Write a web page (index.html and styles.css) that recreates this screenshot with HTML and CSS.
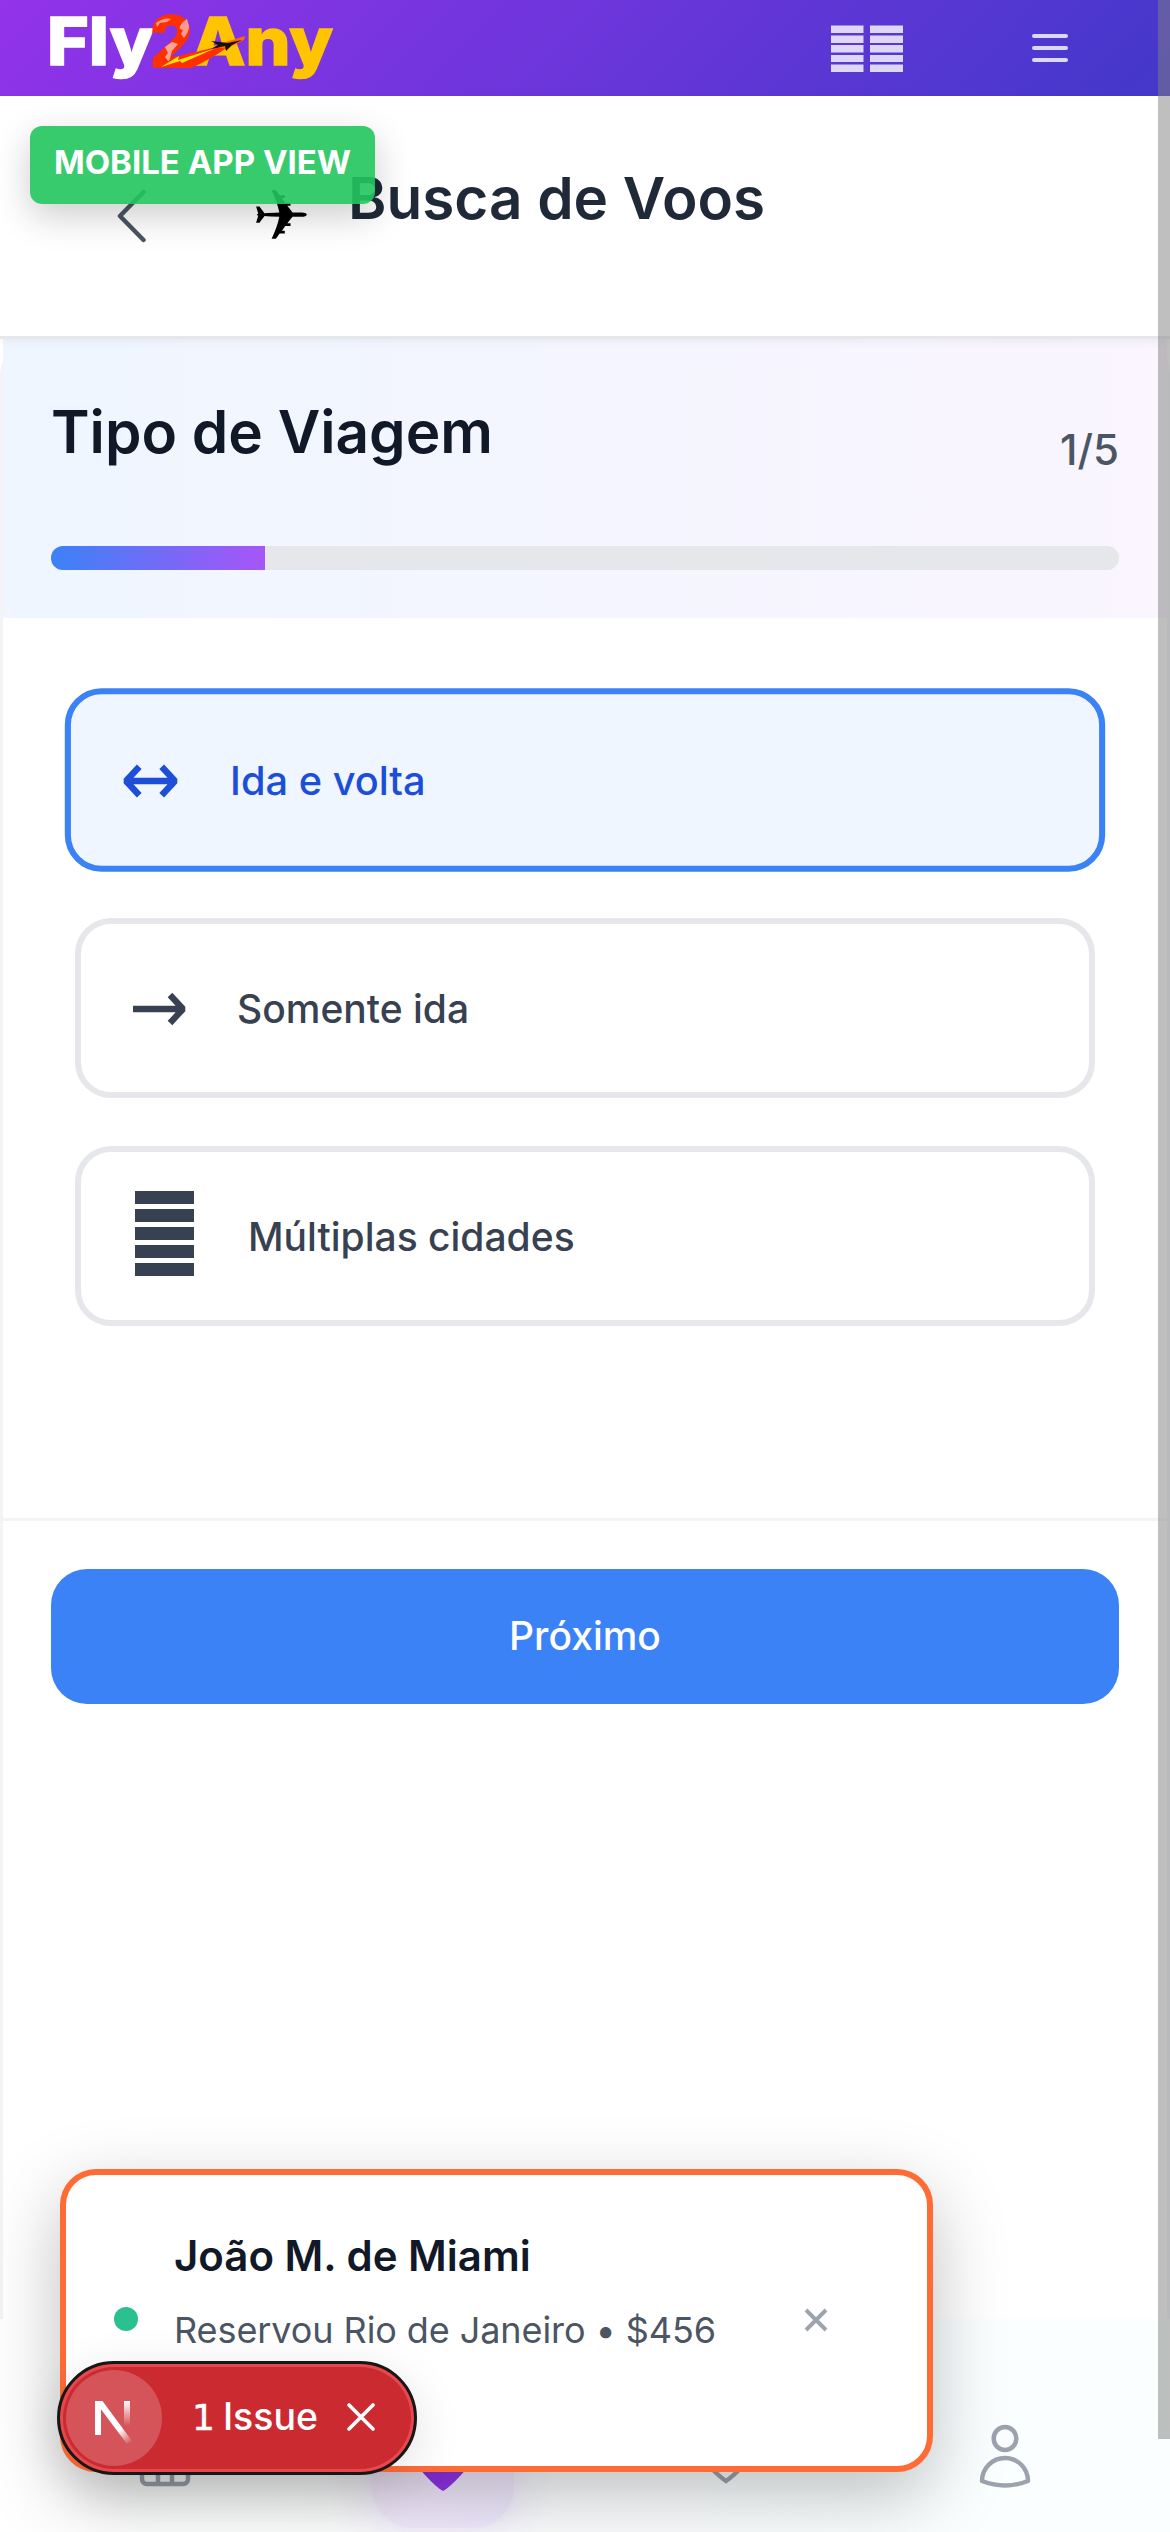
FILE: index.html
```html
<!DOCTYPE html>
<html lang="pt-BR">
<head>
<meta charset="utf-8">
<title>Fly2Any</title>
<link rel="stylesheet" href="styles.css">
</head>
<body>
<div class="page">
  <header class="topbar">
    <svg class="logo" width="300" height="96" viewBox="-6 0 300 96">
      <text class="logo-text" x="-1" y="65" textLength="107" lengthAdjust="spacingAndGlyphs" fill="#fff" stroke="#fff">Fly</text>
      <text class="logo-text" x="143" y="65" textLength="142" lengthAdjust="spacingAndGlyphs" fill="#ffc400" stroke="#ffc400">Any</text>
      <text class="logo-text logo-two" x="102" y="67" textLength="43" lengthAdjust="spacingAndGlyphs" fill="#ff3000" stroke="#ff3000">2</text>
      <path d="M108 23q8-6 15-4l-4 3-7 1-3 4zM139 19q-8 5-7 10l3 1-2 4 3 4q5-6 5-12z" fill="#ff9a8c"/>
      <path d="M124 42l-7 5 3 6-3 4 4 5 3-11 6-7z" fill="#ffa596"/>
      <path d="M114 67Q122 56 148 52L172 46L180 47Q160 61 143 68z" fill="#ff3000"/>
      <path d="M113 67L131 56L130 60L168 48L134 63L132 61z" fill="#ffe400"/>
      <path d="M165 46L197 36L196 40L178 49z" fill="#ff6a00"/>
      <path d="M163 41L180 43L194 40L184 45L178 51L177 46L163 49L170 45z" fill="#16110a"/>
    </svg>
    <div class="topbar-actions">
      <svg width="72" height="47" viewBox="0 0 72 47" fill="#fff" fill-opacity=".8"><path d="M0 .5h32.500v7.500H0zM39 .5h33v7.500H39zM0 10.500h32.500v7.500H0zM39 10.500h33v7.500H39zM0 20h32.500v7.500H0zM39 20h33v7.500H39zM0 30h32.500v7H0zM39 30h33v7H39zM0 39.500h32.500v7.500H0zM39 39.500h33v7.500H39z"/></svg>
      <svg width="36" height="28" viewBox="0 0 36 28" stroke="#fff" stroke-opacity=".8" stroke-width="4" stroke-linecap="round"><path d="M2 2h32M2 14h32M2 26h32"/></svg>
    </div>
  </header>

  <div class="titlebar">
    <svg class="back" width="30" height="54" viewBox="0 0 30 54" fill="none" stroke="#4b5563" stroke-width="4.500" stroke-linecap="round" stroke-linejoin="round"><path d="M26.500 3L3 27l23.500 24"/></svg>
    <span class="plane">✈</span>
    <h1>Busca de Voos</h1>
  </div>

  <main class="wizard">
    <section class="step">
      <div class="step-head">
        <h2>Tipo de Viagem</h2>
        <span class="count">1/5</span>
      </div>
      <div class="track"><div class="fill" style="width:20%"></div></div>
    </section>

    <div class="options">
      <div class="option selected">
        <svg width="60" height="36" viewBox="0 -1 60 36" fill="none" stroke="currentColor" stroke-width="6.300" stroke-linejoin="bevel"><path d="M6 18h48M19 4L6 18l13 14M41 4l13 14-13 14"/></svg>
        <span>Ida e volta</span>
      </div>
      <div class="option">
        <svg width="60" height="36" viewBox="0 -1 60 36" fill="none" stroke="currentColor" stroke-width="6.300" stroke-linejoin="bevel"><path d="M4 18h50M41 4l13 14-13 14"/></svg>
        <span>Somente ida</span>
      </div>
      <div class="option">
        <svg class="stack" width="71" height="85" viewBox="0 0 71 85" fill="currentColor"><path d="M6 0h59v13H6zM6 18h59v13H6zM6 36h59v13H6zM6 54h59v13H6zM6 72h59v13H6z"/></svg>
        <span>Múltiplas cidades</span>
      </div>
    </div>

    <div class="actions"><div class="next">Próximo</div></div>
  </main>

  <nav class="tabs">
    <svg class="tab" width="54" height="66" viewBox="0 0 54 66" fill="none" stroke="#9ca3af" stroke-width="4.500"><rect x="4" y="10" width="46" height="52" rx="5"/><path d="M20 42v20M34 42v20"/></svg>
    <div class="tab active"><svg width="60" height="54" viewBox="0 0 60 54"><path d="M30 53Q24 50 12 37Q2 27 2 17A14 14 0 0 1 30 10A14 14 0 0 1 58 17Q58 27 48 37Q36 50 30 53z" fill="#9333ea"/></svg></div>
    <svg class="tab" width="60" height="54" viewBox="0 0 60 54" fill="none" stroke="#9ca3af" stroke-width="4.500"><path d="M30 47Q24 43 14 33Q5 25 5 17A12 12 0 0 1 30 12A12 12 0 0 1 55 17Q55 25 46 33Q36 43 30 47z"/></svg>
    <svg class="tab" width="54" height="66" viewBox="0 0 54 66" fill="none" stroke="#9ca3af" stroke-width="4.500" stroke-linejoin="round"><ellipse cx="27" cy="16.500" rx="11.300" ry="11.500"/><path d="M4 59A23 23 0 0 1 50 59Q38 63.500 27 63.500Q16 63.500 4 59z"/></svg>
  </nav>

  <div class="badge">MOBILE APP VIEW</div>

  <aside class="toast">
    <span class="dot"></span>
    <div class="toast-text">
      <strong>João M. de Miami</strong>
      <span>Reservou Rio de Janeiro • $456</span>
    </div>
    <svg class="close" width="24" height="24" viewBox="0 0 24 24" stroke="#9ca3af" stroke-width="3.900"><path d="M2 2l20 20M22 2L2 22"/></svg>
  </aside>

  <div class="issue">
    <div class="issue-mark">
      <svg width="42" height="44" viewBox="0 0 42 44">
        <defs>
          <linearGradient id="ng1" gradientUnits="userSpaceOnUse" x1="22" y1="24" x2="38" y2="43"><stop offset=".3" stop-color="#fff"/><stop offset="1" stop-color="#fff" stop-opacity="0"/></linearGradient>
          <linearGradient id="ng2" x1="0" y1="0" x2="0" y2="1"><stop stop-color="#fff"/><stop offset="1" stop-color="#fff" stop-opacity="0"/></linearGradient>
        </defs>
        <rect x="2" y="1" width="6" height="34" fill="#fff"/>
        <path d="M2 1h7.500L39 41l-5 3L7 8z" fill="url(#ng1)"/>
        <rect x="31" y="1" width="6" height="25" fill="url(#ng2)"/>
      </svg>
    </div>
    <span class="issue-text"><span class="issue-count">1</span> Issue</span>
    <svg class="issue-close" width="28" height="28" viewBox="0 0 28 28" stroke="#fff" stroke-width="3.600" stroke-linecap="round"><path d="M2 2l24 24M26 2L2 26"/></svg>
  </div>

  <div class="scrollbar"></div>
</div>
</body>
</html>
```
FILE: styles.css
```css
* { box-sizing: border-box; }
body { margin: 0; background: #fff; font-family: Inter, sans-serif; }
h1, h2 { margin: 0; font-weight: 600; }
svg { display: block; flex: none; }

.page { position: relative; width: 1170px; height: 2532px; overflow: hidden; display: flex; flex-direction: column; }

.topbar { height: 96px; flex: none; padding: 0 102px 0 42px; display: flex; align-items: center; justify-content: space-between; background: linear-gradient(135deg, #9333ea, #4338ca); }
.logo-text { font-family: Inter, sans-serif; font-weight: 800; font-size: 66px; stroke-width: 1.5px; }
.logo-two { font-size: 70px; }
.topbar-actions { display: flex; align-items: center; gap: 129px; }

.titlebar { height: 243px; flex: none; padding: 0 0 0 117px; display: flex; align-items: center; background: #fff; border-bottom: 3px solid #e5e7eb; box-shadow: 0 3px 9px rgba(0, 0, 0, .05); position: relative; }
.plane { width: 60px; margin-left: 105px; font: 70px/60px "DejaVu Sans", sans-serif; color: #000; }
.titlebar h1 { margin: -37px 0 0 36px; font-size: 58.400px; line-height: 72px; color: #1f2937; }

.wizard { height: 1980px; flex: none; border: solid #f3f4f6; border-width: 0 3px; border-radius: 36px 36px 0 0; }
.step { height: 279px; padding: 57px 48px 0; background: linear-gradient(90deg, #eff6ff, #faf5ff); }
.step-head { display: flex; justify-content: space-between; height: 150px; }
.step h2 { font-size: 58.500px; line-height: 72px; color: #111827; }
.count { font-size: 42px; line-height: 60px; margin-top: 24px; font-weight: 500; color: #4b5563; }
.track { height: 24px; border-radius: 12px; overflow: hidden; background: #e5e7eb; }
.fill { height: 100%; background: linear-gradient(90deg, #3b82f6, #a855f7); }

.options { padding: 72px 72px 0; height: 900px; display: flex; flex-direction: column; gap: 48px; }
.option { height: 180px; flex: none; display: flex; align-items: center; gap: 48px; padding: 0 48px; border: 6px solid #e5e7eb; border-radius: 36px; background: #fff; color: #374151; font-size: 39px; font-weight: 500; }
.option.selected { border-color: #3b82f6; background: #eff6ff; color: #1d4ed8; transform: scale(1.02); }
.stack { margin-top: -5px; }

.actions { border-top: 3px solid #f3f4f6; padding: 48px 48px 0; }
.next { height: 135px; padding-bottom: 2px; border-radius: 36px; background: #3b82f6; color: #fff; font-size: 39px; font-weight: 500; display: flex; align-items: center; justify-content: center; }

.tabs { flex: 1; display: flex; align-items: flex-end; padding: 0 138px 44px; background: linear-gradient(90deg, #fff, #fafeff); }
.tab.active { width: 148px; height: 148px; margin: 0 0 -43px 177px; padding-top: 52px; display: flex; justify-content: center; border: 3px solid rgba(255, 255, 255, .35); border-radius: 45px; background: linear-gradient(135deg, #f8ebfd, #f0eaff); box-shadow: 0 0 48px rgba(124, 58, 237, .12); }
.tab.active + .tab { margin-left: 179px; }
.tab:last-child { margin-left: auto; margin-right: 0; }

.badge { position: absolute; left: 30px; top: 126px; width: 345px; height: 78px; padding-bottom: 6px; display: flex; align-items: center; justify-content: center; border-radius: 12px; background: rgba(34, 197, 94, .9); box-shadow: 0 12px 36px rgba(0, 0, 0, .2); color: #fff; font-size: 33px; font-weight: 700; white-space: nowrap; }

.toast { position: absolute; left: 60px; top: 2169px; width: 873px; height: 303px; padding: 0 99px 0 48px; display: flex; align-items: center; border: 6px solid #ff6b35; border-radius: 36px; background: #fff; box-shadow: 0 24px 72px rgba(0, 0, 0, .25); }
.dot { width: 24px; height: 24px; margin-top: -3px; border-radius: 50%; background: #2bc090; }
.close { margin-top: -2px; }
.toast-text { display: flex; flex-direction: column; margin: -61px 0 0 36px; flex: 1; }
.toast-text strong { font-size: 42px; line-height: 63px; font-weight: 600; color: #111827; }
.toast-text span { font-size: 36px; line-height: 54px; margin-top: 16px; letter-spacing: -.08px; color: #4b5563; white-space: nowrap; }

.issue { position: absolute; left: 57px; top: 2361px; width: 360px; height: 114px; padding: 0 39px 0 3px; display: flex; align-items: center; border: 3px solid #171717; border-radius: 57px; background: #ca2a30; box-shadow: inset 0 0 0 3px #e5484d, 0 12px 48px rgba(0, 0, 0, .12); color: #fff; }
.issue-mark { width: 96px; height: 96px; padding-top: 7px; margin-left: 3px; border-radius: 50%; background: rgba(255, 255, 255, .2); display: flex; align-items: center; justify-content: center; }
.issue-text { margin-left: 30px; flex: 1; font-size: 37.500px; line-height: 48px; padding-bottom: 1px; font-weight: 500; white-space: nowrap; }
.issue-count { font-family: "DejaVu Sans", sans-serif; font-size: 36px; font-weight: 400; -webkit-text-stroke: .5px #fff; margin-right: -2px; }
.issue-close { margin-top: -2px; }

.scrollbar { position: absolute; right: 0; top: 0; width: 12px; height: 2439px; background: rgba(128, 128, 128, .5); }
```
